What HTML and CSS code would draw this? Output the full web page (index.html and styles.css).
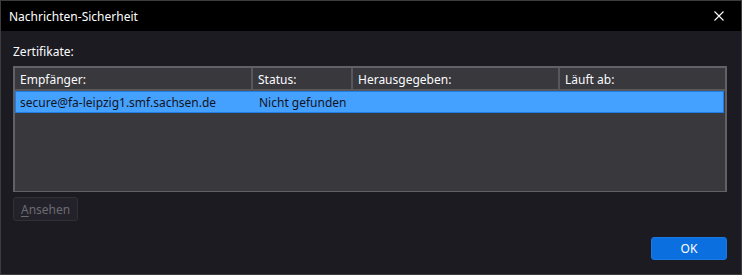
FILE: index.html
```html
<!DOCTYPE html>
<html lang="de">
<head>
    <meta charset="UTF-8">
    <title>Nachrichten-Sicherheit</title>
    <link rel="stylesheet" href="styles.css">
</head>
<body>
    <div class="window">
        <div class="titlebar">
            <span class="title">Nachrichten-Sicherheit</span>
            <button class="close" aria-label="Schließen">
                <svg width="10" height="10" viewBox="0 0 10 10">
                    <path d="M0.5 0.5 L9.5 9.5 M9.5 0.5 L0.5 9.5" stroke="#fff" stroke-width="1.1" fill="none"/>
                </svg>
            </button>
        </div>

        <div class="content">
            <div class="label">Zertifikate:</div>
            <div class="table">
                <div class="row head">
                    <div class="cell">Empfänger:</div>
                    <div class="cell">Status:</div>
                    <div class="cell">Herausgegeben:</div>
                    <div class="cell last">Läuft ab:</div>
                </div>
                <div class="row item selected">
                    <div class="cell">secure@fa-leipzig1.smf.sachsen.de</div>
                    <div class="cell">Nicht gefunden</div>
                    <div class="cell"></div>
                    <div class="cell"></div>
                </div>
            </div>
            <div class="actions">
                <button class="btn" disabled><u>A</u>nsehen</button>
            </div>
            <div class="footer">
                <button class="btn primary">OK</button>
            </div>
        </div>
    </div>
</body>
</html>
```

FILE: styles.css
```css
* {
    box-sizing: border-box;
}

body {
    margin: 0;
    font-family: 'Noto Sans', 'Open Sans', sans-serif;
    font-size: 12px;
    color: #fbfbfe;
    background: #1c1b22;
}

.window {
    width: 742px;
    height: 275px;
    border: 1px solid #3c3c3f;
    display: flex;
    flex-direction: column;
}

.titlebar {
    height: 30px;
    background: #000;
    display: flex;
    align-items: center;
    justify-content: space-between;
    padding-left: 8px;
    color: #fff;
}

.close {
    background: none;
    border: none;
    width: 44px;
    height: 30px;
    padding: 0;
    display: flex;
    align-items: center;
    justify-content: center;
}

.content {
    flex: 1;
    background: #1c1b22;
    padding: 13px 14px 14px 12px;
    display: flex;
    flex-direction: column;
}

.label {
    line-height: 16px;
    margin-bottom: 6px;
}

.table {
    height: 126px;
    background: #38383d;
    border: 2px solid #626266;
    border-bottom-width: 1px;
}

.row {
    display: grid;
    grid-template-columns: 238px 100px 207px 1fr;
}

.head {
    height: 23px;
    border-bottom: 2px solid #58585c;
}

.head .cell {
    border-right: 2px solid #58585c;
    padding: 3px 5px 0;
    line-height: 17px;
}

.head .cell.last {
    border-right: none;
}

.item {
    height: 22px;
    margin: 0 1px 0 0;
    align-items: center;
}

.item .cell {
    padding: 0 5px;
    white-space: nowrap;
}

.selected {
    background: #45a1ff;
    border: 1px solid #1e7ee6;
    color: #15141a;
}

.selected .cell:first-child {
    padding-left: 4px;
}

.actions {
    margin-top: 5px;
}

.btn {
    font-family: inherit;
    font-size: 12px;
    height: 24px;
    border-radius: 3px;
    padding: 0 7px;
    color: #fbfbfe;
    background: #2b2a33;
    border: 1px solid #3a3940;
}

.btn:disabled {
    color: #6c6b72;
    background: #23222a;
    border-color: #303037;
}

.btn u {
    text-decoration-thickness: 1px;
    text-underline-offset: 2px;
}

.footer {
    margin-top: auto;
    display: flex;
    justify-content: flex-end;
}

.primary {
    width: 76px;
    height: 23px;
    background: #0b6fdf;
    border-color: #1b79e4;
    color: #fff;
}
```
